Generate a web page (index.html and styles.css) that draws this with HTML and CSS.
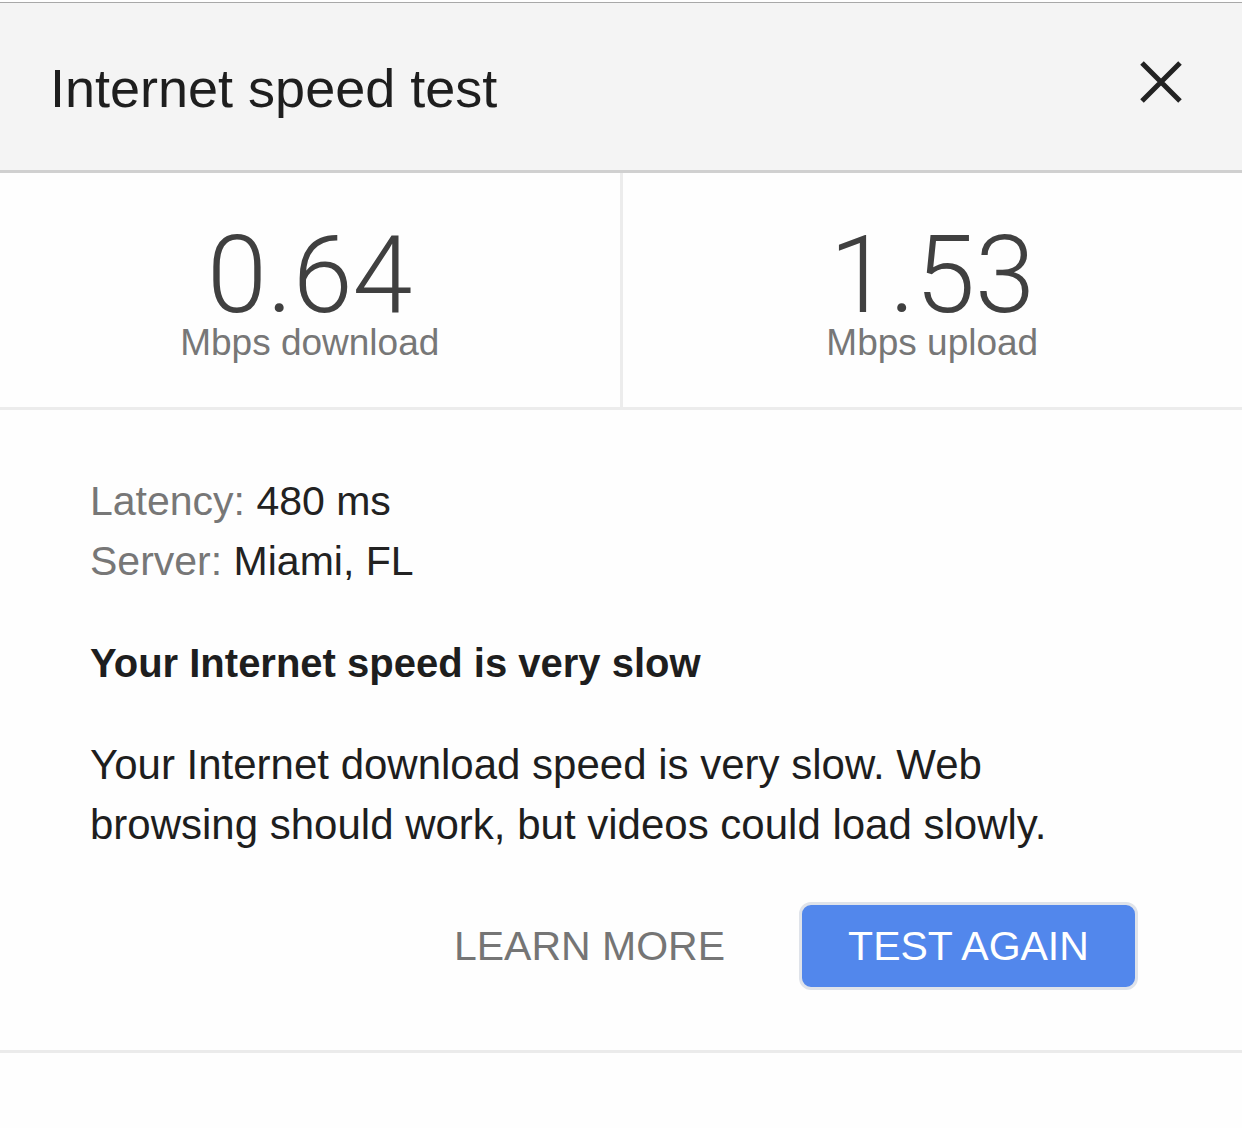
FILE: index.html
```html
<!DOCTYPE html>
<html>
<head>
<meta charset="utf-8">
<link rel="stylesheet" href="styles.css">
</head>
<body>
<div class="card">
  <header class="header">
    <h1 class="title">Internet speed test</h1>
    <button class="close" aria-label="Close">
      <svg width="44" height="44" viewBox="0 0 44 44"><path d="M3 3 L41 41 M41 3 L3 41" stroke="#222" stroke-width="5" fill="none"/></svg>
    </button>
  </header>
  <section class="stats">
    <div class="stat">
      <div class="num">0.64</div>
      <div class="unit">Mbps download</div>
    </div>
    <div class="stat">
      <div class="num">1.53</div>
      <div class="unit">Mbps upload</div>
    </div>
  </section>
  <section class="info">
    <div class="meta">
      <div><span class="label">Latency:</span> <span class="value">480 ms</span></div>
      <div><span class="label">Server:</span> <span class="value">Miami, FL</span></div>
    </div>
    <h2 class="verdict">Your Internet speed is very slow</h2>
    <p class="desc">Your Internet download speed is very slow. Web browsing should work, but videos could load slowly.</p>
    <div class="actions">
      <button class="learn">LEARN MORE</button>
      <button class="again">TEST AGAIN</button>
    </div>
  </section>
</div>
</body>
</html>
```

FILE: styles.css
```css
html, body {
  margin: 0;
  padding: 0;
  background: #fefefe;
}
body {
  font-family: "Liberation Sans", Arial, sans-serif;
  color: #222;
  padding-top: 2px;
}
.card {
  border-top: 1px solid #a8a8a8;
}
.header {
  background: #f4f4f4;
  height: 167px;
  border-bottom: 3px solid #d0d0d0;
  display: flex;
  align-items: center;
  justify-content: space-between;
  padding: 0 59px 0 50px;
}
.title {
  margin: 0;
  font-weight: 400;
  font-size: 54px;
  color: #1e1e1e;
  position: relative;
  top: 1px;
}
.close {
  background: none;
  border: 0;
  padding: 0;
  width: 44px;
  height: 44px;
  display: block;
  margin-top: -9px;
}
.close svg { display: block; }
.stats {
  display: flex;
  height: 234px;
  border-bottom: 3px solid #ececec;
}
.stat {
  flex: 1;
  display: flex;
  flex-direction: column;
  align-items: center;
  padding-top: 62px;
}
.stat + .stat {
  border-left: 3px solid #ececec;
}
.num {
  font-family: Roboto, "Liberation Sans", sans-serif;
  font-weight: 300;
  font-size: 108px;
  line-height: 80px;
  color: #404040;
}
.unit {
  margin-top: 10px;
  font-size: 37px;
  line-height: 36px;
  color: #777;
}
.info {
  padding: 61px 90px 60px 90px;
  border-bottom: 3px solid #ebebeb;
}
.meta {
  font-size: 41px;
  line-height: 60px;
}
.label { color: #777; }
.value { color: #222; }
.verdict {
  margin: 42px 0 0 0;
  font-size: 40px;
  font-weight: 700;
  line-height: 60px;
  color: #1e1e1e;
}
.desc {
  margin: 42px 0 0 0;
  font-size: 42px;
  line-height: 60px;
  color: #1e1e1e;
}
.actions {
  display: flex;
  justify-content: flex-end;
  align-items: center;
  gap: 74px;
  margin-top: 47px;
  padding-right: 14px;
}
.learn {
  background: none;
  border: 0;
  padding: 0;
  font-family: inherit;
  font-size: 41px;
  color: #757575;
}
.again {
  font-family: inherit;
  font-size: 41px;
  color: #fff;
  background: #5287ec;
  border: 3px solid #dfe3ea;
  border-radius: 12px;
  width: 339px;
  height: 88px;
  padding: 0;
}
```
